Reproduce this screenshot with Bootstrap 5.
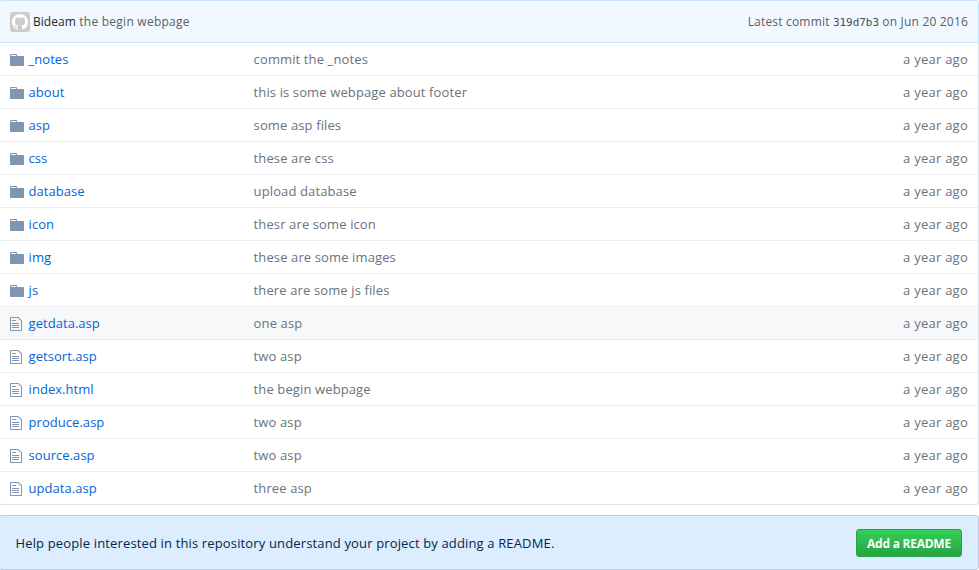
<!DOCTYPE html>
<html lang="en">
<head>
<meta charset="utf-8">
<meta name="viewport" content="width=device-width, initial-scale=1">
<title>Repository files</title>
<link href="https://cdn.jsdelivr.net/npm/bootstrap@5.3.0/dist/css/bootstrap.min.css" rel="stylesheet">
<style>
body { font: 13px/20px "Open Sans", "Noto Sans", sans-serif; color: #24292e; overflow: hidden; background: #fff; }
.repo { margin-left: -1px; }
a { text-decoration: none; color: #0366d6; }
.commit-bar { height: 43px; border: 1px solid #c8e1ff; border-radius: 3px 3px 0 0; background: #f1f8ff; color: #586069; font-size: 12px; padding: 0 10px; letter-spacing: .25px; }
.commit-bar .author { color: #24292e; letter-spacing: .04px; }
.commit-bar .latest { letter-spacing: .19px; }
.commit-bar .sha { font: 11px/1 "DejaVu Sans Mono", monospace; letter-spacing: -.05px; color: #444d56; }
.avatar { width: 20px; height: 20px; border-radius: 3px; background: #ccc; margin-right: 3px; }
.files { border: 1px solid #dfe2e5; border-top: 0; border-radius: 0 0 3px 3px; }
.file-row { height: 33px; border-top: 1px solid #eaecef; padding: 0 10px; color: #6a737d; letter-spacing: .12px; }
.file-row:first-child { border-top: 0; height: 32px; }
.file-row.active { background: #f6f8fa; }
.file-row .age { letter-spacing: .25px; }
.file-name { width: 243.6px; letter-spacing: .04px; }
.file-name svg { fill: #8096b0; margin: 2px 4.6px 0 0; flex: none; }
.file-name .doc { margin-right: 6.6px; }
.readme { height: 55px; margin-top: 10px; border: 1px solid #bccbdf; border-radius: 3px; background: #dbedff; color: #05264c; padding: 0 16px 0 15.5px; letter-spacing: .145px; }
.btn-readme { height: 28px; width: 106px; padding: 1px 0 0; font-size: 12px; line-height: 25px; font-weight: 700; letter-spacing: -.25px; color: #fff; border: 1px solid #28a043; border-radius: 3px; background: linear-gradient(#34d058, #28a745 90%); }
.btn-readme:hover { color: #fff; }
</style>
</head>
<body>
<svg class="d-none" xmlns="http://www.w3.org/2000/svg">
  <symbol id="folder" viewBox="0 0 14 16"><path d="M13 4H7V3c0-.66-.31-1-1-1H1c-.55 0-1 .45-1 1v10c0 .55.45 1 1 1h12c.55 0 1-.45 1-1V5c0-.55-.45-1-1-1zM6 4H1V3h5v1z"/></symbol>
  <symbol id="doc" viewBox="0 0 12 16"><path d="M6 5H2V4h4v1zM2 8h7V7H2v1zm0 2h7V9H2v1zm0 2h7v-1H2v1zm10-7.5V14c0 .55-.45 1-1 1H1c-.55 0-1-.45-1-1V2c0-.55.45-1 1-1h7.5L12 4.5zM11 5L8 2H1v12h10V5z"/></symbol>
</svg>
<main class="repo">
  <div class="commit-bar d-flex align-items-center">
    <svg class="avatar" viewBox="-2 -2 20 20" fill="#fff"><path fill-rule="evenodd" d="M8 0C3.58 0 0 3.58 0 8c0 3.54 2.29 6.53 5.47 7.59.4.07.55-.17.55-.38 0-.19-.01-.82-.01-1.49-2.01.37-2.53-.49-2.69-.94-.09-.23-.48-.94-.82-1.13-.28-.15-.68-.52-.01-.53.63-.01 1.08.58 1.23.82.72 1.21 1.87.87 2.33.66.07-.52.28-.87.51-1.07-1.78-.2-3.64-.89-3.64-3.95 0-.87.31-1.59.82-2.15-.08-.2-.36-1.02.08-2.12 0 0 .67-.21 2.2.82.64-.18 1.32-.27 2-.27.68 0 1.36.09 2 .27 1.53-1.04 2.2-.82 2.2-.82.44 1.1.16 1.92.08 2.12.51.56.82 1.27.82 2.15 0 3.07-1.87 3.75-3.65 3.95.29.25.54.73.54 1.48 0 1.07-.01 1.93-.01 2.2 0 .21.15.46.55.38A8.01 8.01 0 0 0 16 8c0-4.42-3.58-8-8-8z"/></svg>
    <span><a class="author" href="#">Bideam</a> the begin webpage</span>
    <span class="latest ms-auto">Latest commit <span class="sha">319d7b3</span> on Jun 20 2016</span>
  </div>
  <div class="files">
    <div class="file-row d-flex align-items-center"><div class="file-name d-flex align-items-center"><svg width="14" height="16"><use href="#folder"/></svg><a href="#">_notes</a></div><span>commit the _notes</span><span class="age ms-auto">a year ago</span></div>
    <div class="file-row d-flex align-items-center"><div class="file-name d-flex align-items-center"><svg width="14" height="16"><use href="#folder"/></svg><a href="#">about</a></div><span>this is some webpage about footer</span><span class="age ms-auto">a year ago</span></div>
    <div class="file-row d-flex align-items-center"><div class="file-name d-flex align-items-center"><svg width="14" height="16"><use href="#folder"/></svg><a href="#">asp</a></div><span>some asp files</span><span class="age ms-auto">a year ago</span></div>
    <div class="file-row d-flex align-items-center"><div class="file-name d-flex align-items-center"><svg width="14" height="16"><use href="#folder"/></svg><a href="#">css</a></div><span>these are css</span><span class="age ms-auto">a year ago</span></div>
    <div class="file-row d-flex align-items-center"><div class="file-name d-flex align-items-center"><svg width="14" height="16"><use href="#folder"/></svg><a href="#">database</a></div><span>upload database</span><span class="age ms-auto">a year ago</span></div>
    <div class="file-row d-flex align-items-center"><div class="file-name d-flex align-items-center"><svg width="14" height="16"><use href="#folder"/></svg><a href="#">icon</a></div><span>thesr are some icon</span><span class="age ms-auto">a year ago</span></div>
    <div class="file-row d-flex align-items-center"><div class="file-name d-flex align-items-center"><svg width="14" height="16"><use href="#folder"/></svg><a href="#">img</a></div><span>these are some images</span><span class="age ms-auto">a year ago</span></div>
    <div class="file-row d-flex align-items-center"><div class="file-name d-flex align-items-center"><svg width="14" height="16"><use href="#folder"/></svg><a href="#">js</a></div><span>there are some js files</span><span class="age ms-auto">a year ago</span></div>
    <div class="file-row active d-flex align-items-center"><div class="file-name d-flex align-items-center"><svg class="doc" width="12" height="16"><use href="#doc"/></svg><a href="#">getdata.asp</a></div><span>one asp</span><span class="age ms-auto">a year ago</span></div>
    <div class="file-row d-flex align-items-center"><div class="file-name d-flex align-items-center"><svg class="doc" width="12" height="16"><use href="#doc"/></svg><a href="#">getsort.asp</a></div><span>two asp</span><span class="age ms-auto">a year ago</span></div>
    <div class="file-row d-flex align-items-center"><div class="file-name d-flex align-items-center"><svg class="doc" width="12" height="16"><use href="#doc"/></svg><a href="#">index.html</a></div><span>the begin webpage</span><span class="age ms-auto">a year ago</span></div>
    <div class="file-row d-flex align-items-center"><div class="file-name d-flex align-items-center"><svg class="doc" width="12" height="16"><use href="#doc"/></svg><a href="#">produce.asp</a></div><span>two asp</span><span class="age ms-auto">a year ago</span></div>
    <div class="file-row d-flex align-items-center"><div class="file-name d-flex align-items-center"><svg class="doc" width="12" height="16"><use href="#doc"/></svg><a href="#">source.asp</a></div><span>two asp</span><span class="age ms-auto">a year ago</span></div>
    <div class="file-row d-flex align-items-center"><div class="file-name d-flex align-items-center"><svg class="doc" width="12" height="16"><use href="#doc"/></svg><a href="#">updata.asp</a></div><span>three asp</span><span class="age ms-auto">a year ago</span></div>
  </div>
  <div class="readme d-flex align-items-center justify-content-between">
    <span>Help people interested in this repository understand your project by adding a README.</span>
    <button type="button" class="btn btn-readme">Add a README</button>
  </div>
</main>
<script src="https://cdn.jsdelivr.net/npm/bootstrap@5.3.0/dist/js/bootstrap.bundle.min.js"></script>
</body>
</html>
